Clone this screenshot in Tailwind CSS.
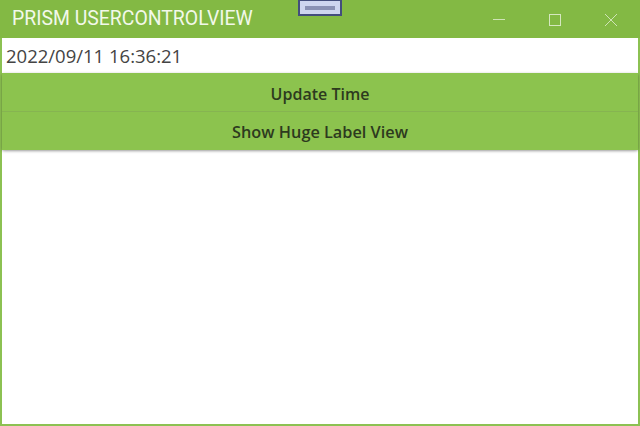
<!DOCTYPE html>
<html>
<head>
<meta charset="utf-8">
<script src="https://cdn.jsdelivr.net/npm/@tailwindcss/browser@4"></script>
</head>
<body class="m-0 bg-white overflow-hidden">
<div class="relative w-[640px] h-[426px] flex flex-col bg-white border-x-2 border-b-2 border-[#8cc152]">
  <header class="h-[38px] -mx-[2px] shrink-0 bg-[#83b944] flex items-center justify-between">
    <h1 class="ml-[12px] text-[19.4px] leading-[38px] text-[#f2f8ea] font-['Roboto',sans-serif] font-normal">PRISM USERCONTROLVIEW</h1>
    <div class="flex items-center h-full mr-[1px]">
      <button class="w-[56px] h-full flex items-center justify-center">
        <svg width="14" height="14" viewBox="0 0 14 14"><path d="M1 7.5H13" stroke="#cfe3b6" stroke-width="1"/></svg>
      </button>
      <button class="w-[56px] h-full flex items-center justify-center">
        <svg width="14" height="14" viewBox="0 0 14 14"><rect x="1.5" y="2.5" width="11" height="11" fill="none" stroke="#d5e7bf" stroke-width="1"/></svg>
      </button>
      <button class="w-[56px] h-full flex items-center justify-center">
        <svg width="14" height="14" viewBox="0 0 14 14"><path d="M1 2L13 14M13 2L1 14" stroke="#cfe3b6" stroke-width="1"/></svg>
      </button>
    </div>
  </header>
  <div class="h-[34px] shrink-0 flex items-center px-[4px] pt-[2px] bg-white text-[18.5px] text-[#444444] font-['Open_Sans',sans-serif]">2022/09/11 16:36:21</div>
  <div class="flex flex-col mt-[1px] rounded-[2px] shadow-[0_1px_3px_rgba(0,0,0,0.4)]">
    <button class="h-[39px] pt-[3px] bg-[#8cc34e] border-b border-[#86b451] text-[16px] font-semibold text-[#2d3a1e] font-['Open_Sans',sans-serif] flex items-center justify-center">Update Time</button>
    <button class="h-[38px] pt-[3px] bg-[#8cc34e] text-[16.3px] font-semibold text-[#2d3a1e] font-['Open_Sans',sans-serif] flex items-center justify-center">Show Huge Label View</button>
  </div>
  <div class="absolute left-[296px] top-0 w-[44px] h-[16px] bg-[#ced5f0] border-2 border-t border-[#434d7d] flex items-center justify-center">
    <div class="w-[30px] h-[4px] bg-[#8a91b5]"></div>
  </div>
</div>
</body>
</html>
